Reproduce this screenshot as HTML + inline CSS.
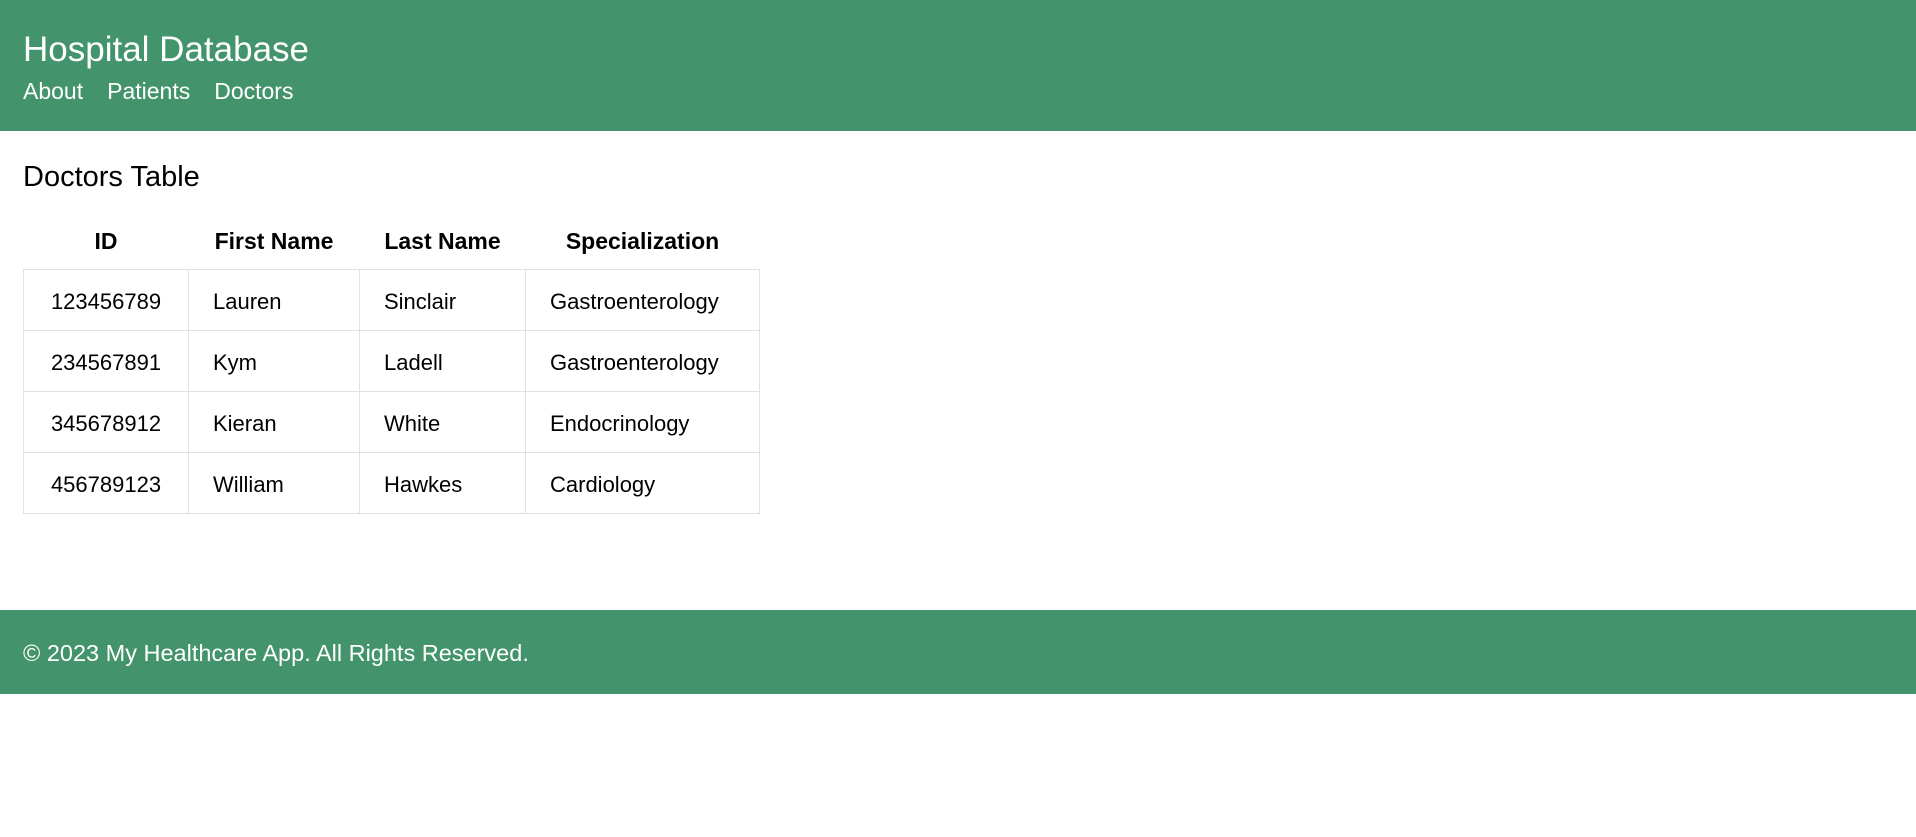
<!DOCTYPE html>
<html><head><meta charset="utf-8"><style>
*{margin:0;padding:0;box-sizing:border-box}
body{width:1916px;height:837px;background:#fff;font-family:"Liberation Sans",sans-serif;color:#000;position:relative;overflow:hidden}
header{position:absolute;left:0;top:0;width:1916px;height:131px;background:#43946c;color:#fff}
.t{position:absolute;left:23px;top:30px;font-size:35px;white-space:nowrap}
.nav{position:absolute;left:23px;top:78px;font-size:23px;white-space:nowrap}
.nav span{margin-right:24px}
h2{position:absolute;left:23px;top:161px;font-size:29px;font-weight:normal}
table{position:absolute;left:23px;top:219px;border-collapse:collapse;font-size:22px}
th{height:50px;font-weight:bold;text-align:center;font-size:23px;padding-bottom:4px}
td{height:61px;border:1px solid #e2e2e2;padding-left:24px;padding-top:5px}
td.id{text-align:center;padding-left:0}
footer{position:absolute;left:0;top:610px;width:1916px;height:84px;background:#43946c;color:#fff;font-size:23.5px}
footer div{position:absolute;left:23px;top:30px}
</style></head><body>
<header><div class="t">Hospital Database</div><div class="nav"><span>About</span><span>Patients</span><span>Doctors</span></div></header>
<h2>Doctors Table</h2>
<table>
<tr><th style="width:165px">ID</th><th style="width:171px">First Name</th><th style="width:166px">Last Name</th><th style="width:234px">Specialization</th></tr>
<tr><td class="id">123456789</td><td>Lauren</td><td>Sinclair</td><td>Gastroenterology</td></tr>
<tr><td class="id">234567891</td><td>Kym</td><td>Ladell</td><td>Gastroenterology</td></tr>
<tr><td class="id">345678912</td><td>Kieran</td><td>White</td><td>Endocrinology</td></tr>
<tr><td class="id">456789123</td><td>William</td><td>Hawkes</td><td>Cardiology</td></tr>
</table>
<footer><div>© 2023 My Healthcare App. All Rights Reserved.</div></footer>
</body></html>
